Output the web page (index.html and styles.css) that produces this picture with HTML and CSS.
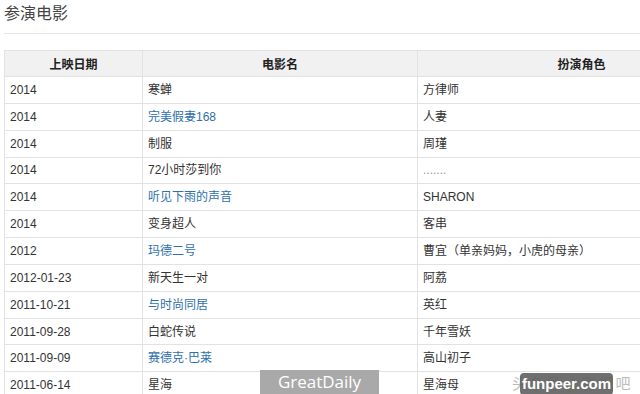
FILE: index.html
```html
<!DOCTYPE html>
<html lang="zh">
<head>
<meta charset="utf-8">
<link rel="stylesheet" href="styles.css">
</head>
<body>
<div class="page">
  <h2 class="title">参演电影</h2>
  <table class="films">
    <colgroup><col class="c1"><col class="c2"><col class="c3"></colgroup>
    <thead>
      <tr><th>上映日期</th><th>电影名</th><th>扮演角色</th></tr>
    </thead>
    <tbody>
      <tr><td>2014</td><td>寒蝉</td><td>方律师</td></tr>
      <tr><td>2014</td><td><a>完美假妻168</a></td><td>人妻</td></tr>
      <tr><td>2014</td><td>制服</td><td>周瑾</td></tr>
      <tr><td>2014</td><td>72小时莎到你</td><td class="dots">.......</td></tr>
      <tr><td>2014</td><td><a>听见下雨的声音</a></td><td>SHARON</td></tr>
      <tr><td>2014</td><td>变身超人</td><td>客串</td></tr>
      <tr><td>2012</td><td><a>玛德二号</a></td><td>曹宜（单亲妈妈，小虎的母亲）</td></tr>
      <tr><td>2012-01-23</td><td>新天生一对</td><td>阿荔</td></tr>
      <tr><td>2011-10-21</td><td><a>与时尚同居</a></td><td>英红</td></tr>
      <tr><td>2011-09-28</td><td>白蛇传说</td><td>千年雪妖</td></tr>
      <tr><td>2011-09-09</td><td><a>赛德克·巴莱</a></td><td>高山初子</td></tr>
      <tr><td>2011-06-14</td><td>星海</td><td>星海母</td></tr>
    </tbody>
  </table>
  <div class="wm-great">GreatDaily</div>
  <div class="wm-toutiao">头条号 / 影视吧</div>
  <div class="wm-fun">funpeer.com</div>
</div>
</body>
</html>
```
FILE: styles.css
```css
html, body {
  margin: 0;
  padding: 0;
  background: #fff;
  overflow: hidden;
}
.page {
  position: relative;
  width: 640px;
  height: 394px;
  overflow: hidden;
  font-family: "Liberation Sans", Arial, "Noto Sans CJK SC", sans-serif;
  color: #333;
}
.title {
  margin: 0 0 0 4px;
  padding: 2px 0 11px 0;
  font-size: 16px;
  font-weight: normal;
  line-height: 20px;
  color: #444;
  border-bottom: 1px solid #e8e8e8;
  font-family: "Noto Sans CJK SC", sans-serif;
}
.films {
  margin: 16px 0 0 4px;
  width: 741px;
  border-collapse: collapse;
  font-size: 12px;
  table-layout: fixed;
}
.films .c1 { width: 138px; }
.films .c2 { width: 275px; }
.films .c3 { width: 328px; }
.films th, .films td {
  border: 1px solid #e2e2e2;
  text-align: left;
  vertical-align: middle;
  padding: 0 5px;
  height: 25.85px;
  line-height: 16px;
  white-space: nowrap;
  overflow: hidden;
}
.films th {
  background: #f1f1f1;
  font-weight: bold;
  text-align: center;
  height: 25px;
  color: #222;
  font-family: "Noto Sans CJK SC", sans-serif;
}
.films td {
  font-family: "Liberation Sans", Arial, "Noto Sans CJK SC", sans-serif;
}
.films a {
  color: #2f6fab;
  text-decoration: none;
}
.films .dots {
  color: #999;
}
.wm-great {
  position: absolute;
  left: 260px;
  top: 370px;
  width: 119px;
  height: 24px;
  background: #a9a9a9;
  color: #fff;
  font-size: 17px;
  line-height: 24px;
  text-align: center;
  font-family: "Open Sans", "Liberation Sans", sans-serif;
}
.wm-toutiao {
  position: absolute;
  left: 512px;
  top: 372px;
  font-size: 15px;
  color: #bbb;
  font-family: "Noto Sans CJK SC", sans-serif;
  letter-spacing: 2px;
}
.wm-fun {
  position: absolute;
  left: 520px;
  top: 373px;
  width: 93px;
  height: 22px;
  background: rgba(95, 95, 95, 0.9);
  border-radius: 4px;
  color: #fff;
  font-size: 15px;
  font-weight: bold;
  line-height: 22px;
  text-align: center;
  font-family: "Liberation Sans", Arial, sans-serif;
}
```
